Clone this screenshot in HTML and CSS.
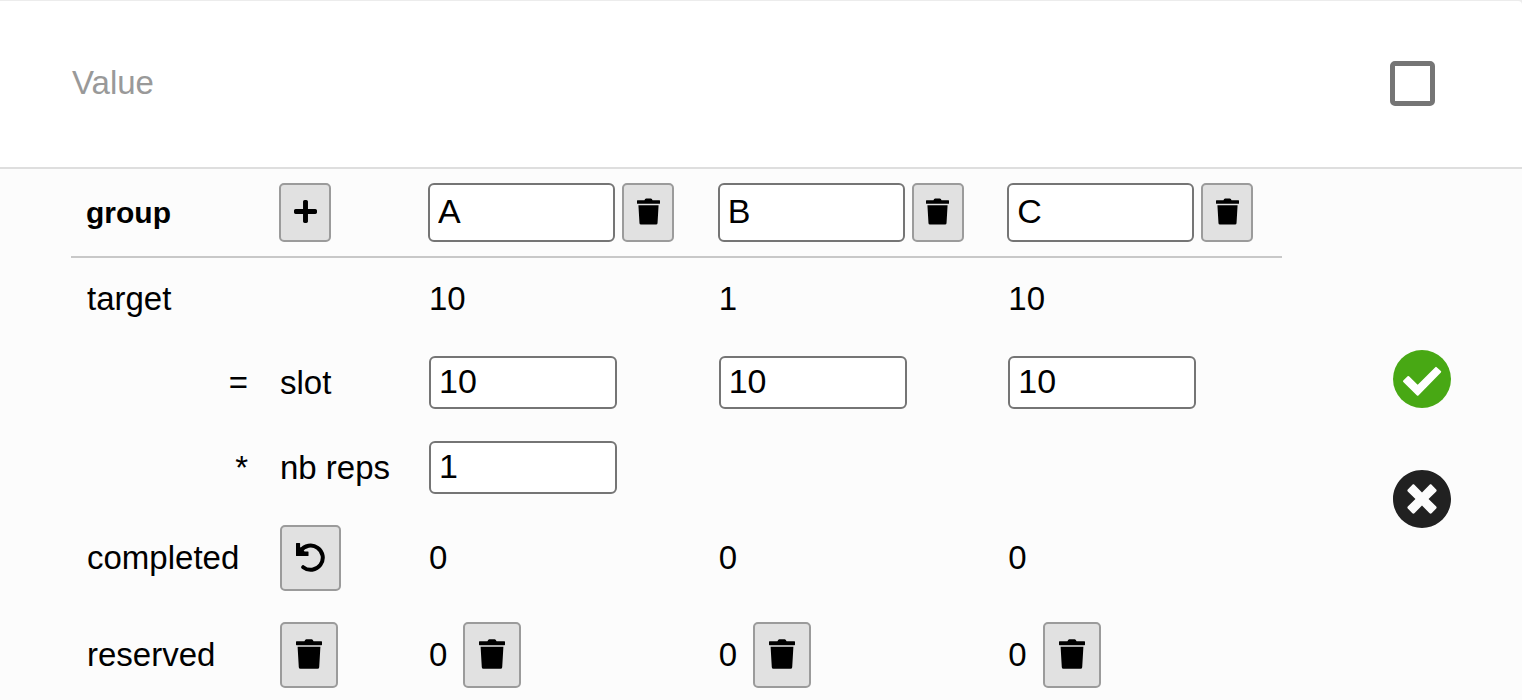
FILE: index.html
```html
<!DOCTYPE html>
<html lang="en">
<head>
<meta charset="utf-8">
<meta name="viewport" content="width=device-width, initial-scale=1">
<title>Quotas</title>
<link rel="stylesheet" href="styles.css">
</head>
<body>
<svg class="sprite" aria-hidden="true">
  <symbol id="trash" viewBox="0 0 26 30"><path d="M.6 2.2H8.4L9.2.9Q9.6.3 10.4.3H15.6Q16.4.3 16.8.9L17.6 2.2H25.4Q26 2.2 26 2.8V5.6Q26 6.2 25.4 6.2H.6Q0 6.2 0 5.6V2.8Q0 2.2.6 2.2zM1.6 7.8H24.4L23.2 28.2Q23.1 29.8 21.5 29.8H4.5Q2.9 29.8 2.8 28.2z"/></symbol>
  <symbol id="plus" viewBox="0 0 448 512"><path d="M416 208H272V64c0-17.67-14.33-32-32-32h-32c-17.67 0-32 14.33-32 32v144H32c-17.67 0-32 14.33-32 32v32c0 17.67 14.33 32 32 32h144v144c0 17.67 14.33 32 32 32h32c17.67 0 32-14.33 32-32V304h144c17.67 0 32-14.33 32-32v-32c0-17.67-14.33-32-32-32z"/></symbol>
  <symbol id="undo" viewBox="0 0 29 29"><path d="M.5 0H3.6Q4.1 0 4.1.5V4L8.6 8.6H12Q12.5 8.6 12.5 9.1V12.5Q12.5 13 12 13H.5Q0 13 0 12.5V.5Q0 0 .5 0z"/><path d="M4.6 8A12.1 12.1 0 1 1 7.2 24.2" fill="none" stroke="currentColor" stroke-width="4" stroke-linecap="round"/></symbol>
</svg>
<main class="card">
  <header class="card-header">
    <label for="value">Value</label>
    <input class="check" type="checkbox" id="value">
  </header>
  <section class="panel">
    <table class="quota">
      <colgroup><col class="col-label"><col class="col-detail"><col><col><col></colgroup>
      <thead>
        <tr>
          <th scope="row">group</th>
          <th><button class="btn btn-small" aria-label="Add group"><svg class="icon-small"><use href="#plus"/></svg></button></th>
          <th><div class="group"><input class="field field-tall" type="text" value="A" aria-label="Group 1"><button class="btn btn-small" aria-label="Delete group A"><svg class="icon-small"><use href="#trash"/></svg></button></div></th>
          <th><div class="group"><input class="field field-tall" type="text" value="B" aria-label="Group 2"><button class="btn btn-small" aria-label="Delete group B"><svg class="icon-small"><use href="#trash"/></svg></button></div></th>
          <th><div class="group"><input class="field field-tall" type="text" value="C" aria-label="Group 3"><button class="btn btn-small" aria-label="Delete group C"><svg class="icon-small"><use href="#trash"/></svg></button></div></th>
        </tr>
      </thead>
      <tbody>
        <tr><td>target</td><td></td><td>10</td><td>1</td><td>10</td></tr>
        <tr>
          <td class="operator">=</td><td>slot</td>
          <td><input class="field" type="text" value="10" aria-label="Slot A"></td>
          <td><input class="field" type="text" value="10" aria-label="Slot B"></td>
          <td><input class="field" type="text" value="10" aria-label="Slot C"></td>
        </tr>
        <tr>
          <td class="operator">*</td><td><label for="reps">nb reps</label></td>
          <td><input class="field" type="text" id="reps" value="1"></td><td></td><td></td>
        </tr>
        <tr class="tools">
          <td>completed</td>
          <td><button class="btn btn-wide" aria-label="Reset completed"><svg class="icon-undo"><use href="#undo"/></svg></button></td>
          <td>0</td><td>0</td><td>0</td>
        </tr>
        <tr class="tools tools-last">
          <td>reserved</td>
          <td><button class="btn" aria-label="Clear all reserved"><svg class="icon"><use href="#trash"/></svg></button></td>
          <td><div class="count">0<button class="btn" aria-label="Clear reserved A"><svg class="icon"><use href="#trash"/></svg></button></div></td>
          <td><div class="count">0<button class="btn" aria-label="Clear reserved B"><svg class="icon"><use href="#trash"/></svg></button></div></td>
          <td><div class="count">0<button class="btn" aria-label="Clear reserved C"><svg class="icon"><use href="#trash"/></svg></button></div></td>
        </tr>
      </tbody>
    </table>
    <div class="actions">
      <button class="round round-save" aria-label="Save"><svg viewBox="0 0 58 58"><circle cx="29" cy="29" r="29"/><path class="mark" d="M15.3 27L11 31.3 24.7 44.8 47.2 21.8 43 17.9 24.7 36.2z"/></svg></button>
      <button class="round" aria-label="Cancel"><svg viewBox="8 8 496 496"><path d="M256 8C119 8 8 119 8 256s111 248 248 248 248-111 248-248S393 8 256 8zm121.6 313.1c4.7 4.7 4.7 12.3 0 17L338 377.6c-4.7 4.7-12.3 4.7-17 0L256 312l-65.1 65.6c-4.7 4.7-12.3 4.7-17 0L134.4 338c-4.7-4.7-4.7-12.3 0-17l65.6-65-65.6-65.1c-4.7-4.7-4.7-12.3 0-17l39.6-39.6c4.7-4.7 12.3-4.7 17 0l65 65.7 65.1-65.6c4.7-4.7 12.3-4.7 17 0l39.6 39.6c4.7 4.7 4.7 12.3 0 17L312 256l65.6 65.1z"/></svg></button>
    </div>
  </section>
</main>
</body>
</html>
```
FILE: styles.css
```css
* {
  box-sizing: border-box;
}

body {
  margin: 0;
  padding-top: 1px;
  background: #ececec;
  color: #000;
  font-family: "Liberation Sans", Arial, sans-serif;
  font-size: 33px;
  line-height: 50px;
}

.sprite {
  position: absolute;
  width: 0;
  height: 0;
}

.card {
  overflow: hidden;
  border-top-right-radius: 4px;
  background: #fff;
}

.card-header {
  display: flex;
  align-items: center;
  justify-content: space-between;
  padding: 57px 87px 59px 72px;
  border-bottom: 2px solid #dedede;
  color: #999;
}

.check {
  appearance: none;
  width: 45px;
  height: 45px;
  margin: 0;
  border: 5px solid #757575;
  border-radius: 5px;
  background: #fff;
}

.panel {
  display: flex;
  align-items: center;
  padding-left: 71px;
  background: #fcfcfc;
}

.quota {
  flex: 1;
  table-layout: fixed;
  border-collapse: separate;
  border-spacing: 0;
}

.col-label {
  width: 193px;
}

.col-detail {
  width: 149px;
}

.quota th {
  padding: 14px 15px;
  border-bottom: 2px solid #c8c8c8;
  font-size: 30px;
  text-align: left;
}

.quota td {
  padding: 16px;
  white-space: nowrap;
}

.quota .operator {
  text-align: right;
}

.quota .tools td {
  padding: 15px 16px 16px;
}

.quota .tools-last td {
  padding-bottom: 12px;
}

.group,
.count {
  display: flex;
  align-items: center;
  gap: 7px;
}

.count {
  gap: 16px;
}

.field {
  display: block;
  width: 188px;
  height: 53px;
  padding: 0 8px 2px;
  border: 2px solid #757575;
  border-radius: 6px;
  background: #fff;
  color: #000;
  font-family: inherit;
  font-size: 34px;
}

.field-tall {
  width: 187px;
  height: 59px;
}

.btn {
  display: flex;
  align-items: center;
  justify-content: center;
  flex: none;
  width: 58px;
  height: 66px;
  padding: 0 0 2px;
  border: 2px solid #9b9b9b;
  border-radius: 5px;
  background: #e1e1e1;
  color: #000;
}

.btn-small {
  width: 52px;
  height: 59px;
}

.btn-wide {
  width: 61px;
}

.btn svg {
  fill: currentColor;
}

.icon {
  width: 26px;
  height: 30px;
}

.icon-small {
  width: 23px;
  height: 27px;
}

.icon-undo {
  width: 29px;
  height: 29px;
}

.actions {
  display: flex;
  flex-direction: column;
  align-items: center;
  gap: 62px;
  width: 240px;
  padding: 9px 0 0 40px;
}

.round {
  width: 58px;
  height: 58px;
  padding: 0;
  border: 0;
  border-radius: 50%;
  background: transparent;
  color: #212121;
}

.round svg {
  display: block;
  width: 58px;
  height: 58px;
  fill: currentColor;
}

.round-save {
  color: #48a814;
}

.round .mark {
  fill: #fff;
  stroke: #fff;
  stroke-width: 2;
  stroke-linejoin: round;
}
```
